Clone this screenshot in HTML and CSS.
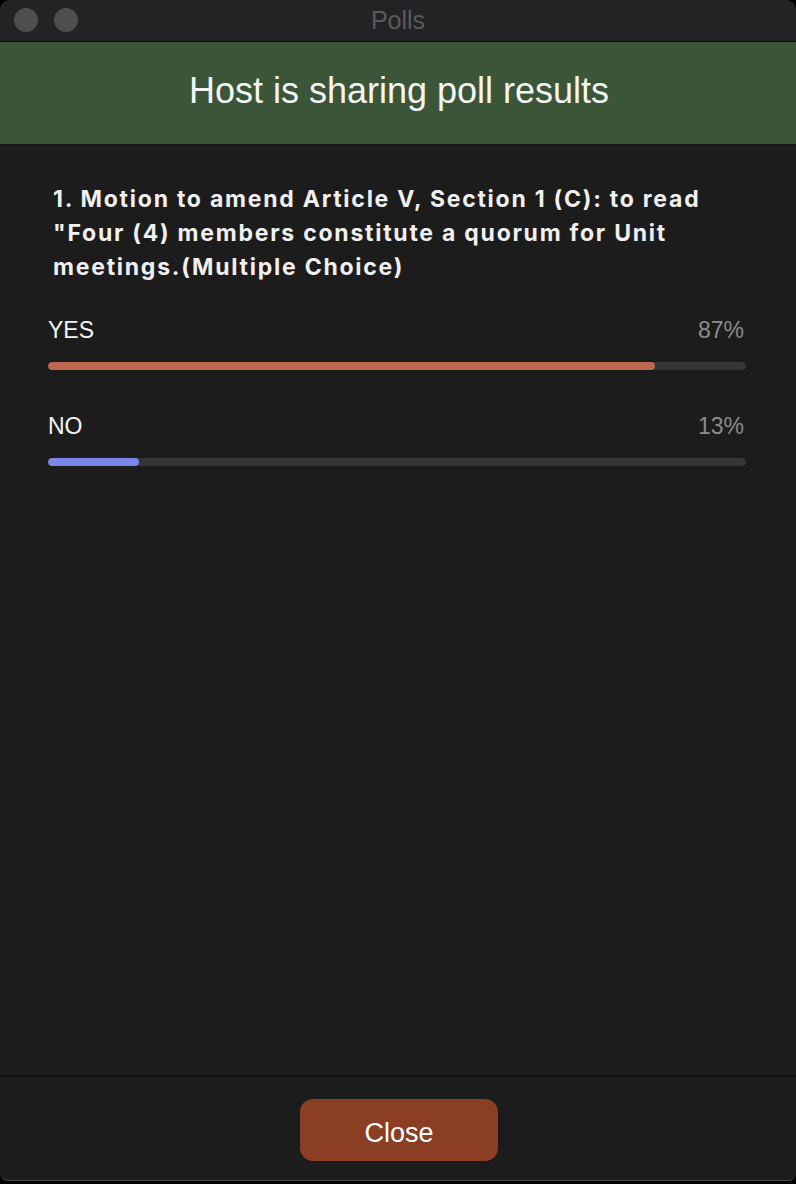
FILE: index.html
```html
<!DOCTYPE html>
<html>
<head>
<meta charset="utf-8">
<link rel="stylesheet" href="styles.css">
</head>
<body>
<div class="window">
  <div class="titlebar">
    <div class="lights">
      <span class="light"></span>
      <span class="light"></span>
    </div>
    <div class="title">Polls</div>
  </div>
  <div class="banner">Host is sharing poll results</div>
  <div class="main">
    <div class="question">1. Motion to amend Article V, Section 1 (C): to read "Four (4) members constitute a quorum for Unit meetings.(Multiple Choice)</div>
    <div class="option">
      <div class="option-head">
        <span class="option-label">YES</span>
        <span class="option-pct">87%</span>
      </div>
      <div class="track"><div class="fill fill-yes" style="width: 87%"></div></div>
    </div>
    <div class="option">
      <div class="option-head">
        <span class="option-label">NO</span>
        <span class="option-pct">13%</span>
      </div>
      <div class="track"><div class="fill fill-no" style="width: 13%"></div></div>
    </div>
  </div>
  <div class="footer">
    <button class="close-btn">Close</button>
  </div>
</div>
</body>
</html>
```

FILE: styles.css
```css
html, body {
  margin: 0;
  padding: 0;
  background: #000;
}

body {
  width: 796px;
  height: 1184px;
  overflow: hidden;
  font-family: "Liberation Sans", Arial, sans-serif;
}

.window {
  height: 1180px;
  display: flex;
  flex-direction: column;
  background: #1c1c1c;
  border-radius: 10px 10px 8px 8px;
  border-bottom: 1px solid #4a4a4a;
  overflow: hidden;
}

.titlebar {
  height: 41px;
  flex: none;
  background: #232325;
  border-bottom: 1px solid #0b0b0b;
  position: relative;
  display: flex;
  align-items: center;
  justify-content: center;
}

.lights {
  position: absolute;
  left: 14px;
  top: 8px;
  display: flex;
  gap: 16px;
}

.light {
  width: 24px;
  height: 24px;
  border-radius: 50%;
  background: #4e4e50;
}

.title {
  font-size: 25px;
  color: #5a5a5c;
  line-height: 41px;
}

.banner {
  height: 103px;
  flex: none;
  background: #3a5538;
  border-bottom: 1px solid #151515;
  color: #f4f4f4;
  font-size: 36px;
  display: flex;
  align-items: center;
  justify-content: center;
  padding-bottom: 5px;
  padding-left: 2px;
  box-sizing: border-box;
}

.main {
  flex: 1;
  padding: 37px 50px 0 48px;
}

.question {
  font-family: Inter, "Liberation Sans", sans-serif;
  font-weight: 700;
  font-size: 23px;
  line-height: 34px;
  color: #f0f0f0;
  padding-left: 5px;
  margin-bottom: 32px;
  letter-spacing: 1.75px;
}

.option {
  margin-bottom: 42px;
}

.option-head {
  display: flex;
  justify-content: space-between;
  font-size: 23px;
  line-height: 28px;
  margin-bottom: 18px;
}

.option-label {
  color: #f4f4f4;
}

.option-pct {
  color: #8c8c8c;
  padding-right: 2px;
}

.track {
  height: 8px;
  border-radius: 4px;
  background: #363636;
  overflow: hidden;
}

.fill {
  height: 100%;
  border-radius: 4px;
}

.fill-yes {
  background: #bd6650;
}

.fill-no {
  background: #7c86e8;
}

.footer {
  flex: none;
  border-top: 2px solid #121212;
  display: flex;
  justify-content: center;
  padding-top: 22px;
  box-sizing: border-box;
  height: 105px;
}

.close-btn {
  width: 198px;
  height: 62px;
  border: none;
  border-radius: 13px;
  background: #8a3e23;
  color: #ffffff;
  font-family: "Liberation Sans", Arial, sans-serif;
  font-size: 27px;
  padding: 0;
  padding-top: 7px;
  margin-left: 2px;
}
```
